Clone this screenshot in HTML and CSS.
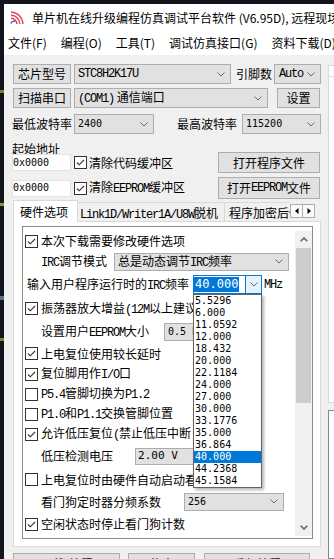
FILE: index.html
```html
<!DOCTYPE html>
<html lang="zh-CN">
<head>
<meta charset="UTF-8">
<meta name="viewport" content="width=device-width, initial-scale=1.0">
<title>STC-ISP</title>
<link rel="stylesheet" href="styles.css">
</head>
<body>
<div class="desk"></div>
<div class="win">
  <div class="titlebar">
    <svg class="appicon" viewBox="0 0 15 13">
      <g fill="none" stroke="#e23a5c" stroke-width="1.4">
        <path d="M1 1.2A11.8 11.8 0 0 1 12.8 13"/>
        <path d="M1 4.2A8.8 8.8 0 0 1 9.8 13"/>
        <path d="M1 7.2A5.8 5.8 0 0 1 6.8 13"/>
      </g>
      <path d="M0.8 12.6Q2 9.6 5 10.2" fill="none" stroke="#2f5bd0" stroke-width="1.4"/>
    </svg>
    <span class="title">单片机在线升级编程仿真调试平台软件 (V6.95D), 远程现场升级/仿真器</span>
  </div>
  <div class="menubar">
    <span>文件(F)</span>
    <span>编程(O)</span>
    <span>工具(T)</span>
    <span>调试仿真接口(G)</span>
    <span>资料下载(D)</span>
  </div>
  <div class="client">
    <div class="main">
      <div class="row">
        <div class="btn w-side">芯片型号</div>
        <div class="combo c-chip"><span class="mono">STC8H2K17U</span><svg class="chev" viewBox="0 0 8 5"><path d="M.5 .5 4 4 7.5 .5"/></svg></div>
        <span class="lbl l-pins">引脚数</span>
        <div class="combo c-auto"><span class="mono">Auto</span><svg class="chev" viewBox="0 0 8 5"><path d="M.5 .5 4 4 7.5 .5"/></svg></div>
      </div>
      <div class="row r2">
        <div class="btn w-side">扫描串口</div>
        <div class="combo c-port"><span><span class="mono">(COM1)</span> 通信端口</span><svg class="chev" viewBox="0 0 8 5"><path d="M.5 .5 4 4 7.5 .5"/></svg></div>
        <div class="btn b-set">设置</div>
      </div>
      <div class="row r3">
        <span class="lbl l-baud">最低波特率</span>
        <div class="combo c-baud1"><span class="num">2400</span><svg class="chev" viewBox="0 0 8 5"><path d="M.5 .5 4 4 7.5 .5"/></svg></div>
        <span class="lbl l-baud2">最高波特率</span>
        <div class="combo c-baud2"><span class="num">115200</span><svg class="chev" viewBox="0 0 8 5"><path d="M.5 .5 4 4 7.5 .5"/></svg></div>
      </div>
      <div class="addr">起始地址</div>
      <div class="row r5">
        <div class="edit"><span class="num">0x0000</span></div>
        <span class="cb"><svg viewBox="0 0 11 11"><path d="M2 5.5 4.3 7.8 9 3"/></svg></span>
        <span class="cbl">清除代码缓冲区</span>
        <div class="btn b-open">打开程序文件</div>
      </div>
      <div class="row r6">
        <div class="edit"><span class="num">0x0000</span></div>
        <span class="cb"><svg viewBox="0 0 11 11"><path d="M2 5.5 4.3 7.8 9 3"/></svg></span>
        <span class="cbl">清除<span class="mono">EEPROM</span>缓冲区</span>
        <div class="btn b-open">打开<span class="mono">EEPROM</span>文件</div>
      </div>

      <div class="tabs">
        <div class="tab sel">硬件选项</div>
        <div class="tab tab2"><span class="mono">Link1D/Writer1A/U8W</span>脱机</div>
        <div class="tab tab3">程序加密后传输</div>
        <div class="tabarw">
          <span class="arw"><svg viewBox="0 0 4 6"><path d="M3.5 0V6L0 3z"/></svg></span>
          <span class="arw"><svg viewBox="0 0 4 6"><path d="M.5 0V6L4 3z"/></svg></span>
        </div>
      </div>

      <div class="tabpanel">
        <div class="grp">
          <div class="pcontent">
            <div class="prow ph20">
              <span class="cb"><svg viewBox="0 0 11 11"><path d="M2 5.5 4.3 7.8 9 3"/></svg></span>
              <span>本次下载需要修改硬件选项</span>
            </div>
            <div class="prow ph21 ind">
              <span><span class="mono">IRC</span>调节模式</span>
              <div class="combo c-irc"><span>总是动态调节<span class="mono">IRC</span>频率</span><svg class="chev" viewBox="0 0 8 5"><path d="M.5 .5 4 4 7.5 .5"/></svg></div>
            </div>
            <div class="prow ph25 ind-s">
              <span>输入用户程序运行时的<span class="mono">IRC</span>频率</span>
              <div class="c-freq">
                <div class="val"><span class="hl">40.000</span></div>
                <div class="drop"><svg class="chev" viewBox="0 0 8 5"><path d="M.5 .5 4 4 7.5 .5"/></svg></div>
                <div class="dlist">
                  <div>5.5296</div>
                  <div>6.000</div>
                  <div>11.0592</div>
                  <div>12.000</div>
                  <div>18.432</div>
                  <div>20.000</div>
                  <div>22.1184</div>
                  <div>24.000</div>
                  <div>27.000</div>
                  <div>30.000</div>
                  <div>33.1776</div>
                  <div>35.000</div>
                  <div>36.864</div>
                  <div class="cur">40.000</div>
                  <div>44.2368</div>
                  <div>45.1584</div>
                </div>
              </div>
              <span class="mono mhz">MHz</span>
            </div>
            <div class="prow ph23">
              <span class="cb"><svg viewBox="0 0 11 11"><path d="M2 5.5 4.3 7.8 9 3"/></svg></span>
              <span>振荡器放大增益<span class="mono">(12M</span>以上建议选择<span class="mono">)</span></span>
            </div>
            <div class="prow ph23 ind">
              <span>设置用户<span class="mono">EEPROM</span>大小</span>
              <div class="combo c-eep"><span class="num">0.5 K</span></div>
            </div>
            <div class="prow ph21">
              <span class="cb"><svg viewBox="0 0 11 11"><path d="M2 5.5 4.3 7.8 9 3"/></svg></span>
              <span>上电复位使用较长延时</span>
            </div>
            <div class="prow ph20">
              <span class="cb"><svg viewBox="0 0 11 11"><path d="M2 5.5 4.3 7.8 9 3"/></svg></span>
              <span>复位脚用作<span class="mono">I/O</span>口</span>
            </div>
            <div class="prow ph20">
              <span class="cb"></span>
              <span><span class="mono">P5.4</span>管脚切换为<span class="mono">P1.2</span></span>
            </div>
            <div class="prow ph20">
              <span class="cb"></span>
              <span><span class="mono">P1.0</span>和<span class="mono">P1.1</span>交换管脚位置</span>
            </div>
            <div class="prow ph20">
              <span class="cb"><svg viewBox="0 0 11 11"><path d="M2 5.5 4.3 7.8 9 3"/></svg></span>
              <span>允许低压复位<span class="mono">(</span>禁止低压中断<span class="mono">)</span></span>
            </div>
            <div class="prow ph24 ind">
              <span>低压检测电压</span>
              <div class="combo c-volt"><span class="num">2.00 V</span></div>
            </div>
            <div class="prow ph23">
              <span class="cb"></span>
              <span>上电复位时由硬件自动启动看门狗</span>
            </div>
            <div class="prow ph21 ind">
              <span>看门狗定时器分频系数</span>
              <div class="combo c-wdt"><span class="num">256</span><svg class="chev" viewBox="0 0 8 5"><path d="M.5 .5 4 4 7.5 .5"/></svg></div>
            </div>
            <div class="prow ph24">
              <span class="cb"><svg viewBox="0 0 11 11"><path d="M2 5.5 4.3 7.8 9 3"/></svg></span>
              <span>空闲状态时停止看门狗计数</span>
            </div>
          </div>
          <div class="vscroll">
            <div class="sb-btn"><svg viewBox="0 0 8 5"><path d="M.7 4.3 4 1 7.3 4.3"/></svg></div>
            <div class="sb-thumb"></div>
            <div class="sb-track"></div>
            <div class="sb-btn"><svg viewBox="0 0 8 5"><path d="M.7 .7 4 4 7.3 .7"/></svg></div>
          </div>
        </div>
      </div>

      <div class="bottom">
        <div class="btn bb1">下载/编程</div>
        <div class="btn bb2">停止</div>
        <div class="btn bb3">重复编程</div>
      </div>
    </div>

    <div class="side">
      <div class="s-tab"></div>
      <div class="s-panel"></div>
      <div class="s-box"></div>
    </div>
  </div>
</div>
</body>
</html>
```

FILE: styles.css
```css
* {
	box-sizing: border-box;
}
body {
	margin: 0;
	width: 334px;
	height: 559px;
	overflow: hidden;
	display: flex;
	background: #12161c;
	font-family: "Noto Sans CJK SC", sans-serif;
	font-size: 12px;
	line-height: 16px;
	color: #000;
}
.mono {
	font-family: "Liberation Mono", monospace;
	letter-spacing: -1.2px;
}
.num {
	font-family: "DejaVu Sans Mono", monospace;
	font-size: 10px;
}

/* desktop strip and window frame */
.desk {
	width: 4px;
	flex: none;
	background: linear-gradient(#12161c 0 90px, #8a7a2a 90px 93px, #12161c 93px 203px, #a08c30 203px 206px, #12161c 206px 296px, #5a6e90 296px 300px, #12161c 300px 338px, #8a7a2a 338px 341px, #12161c 341px);
}
.win {
	flex: 1;
	min-width: 0;
	margin-top: 4px;
	display: flex;
	flex-direction: column;
	background: #f0f0f0;
}
.titlebar {
	height: 27px;
	flex: none;
	display: flex;
	align-items: center;
	padding-left: 6px;
	background: #fff;
	white-space: nowrap;
	overflow: hidden;
}
.appicon {
	width: 15px;
	height: 13px;
	flex: none;
	margin-right: 7px;
}
.menubar {
	height: 24px;
	flex: none;
	display: flex;
	align-items: center;
	gap: 14px;
	padding-left: 4px;
	background: #fff;
	white-space: nowrap;
	overflow: hidden;
}
.client {
	flex: 1;
	min-height: 0;
	display: flex;
}
.main {
	width: 317px;
	flex: none;
	display: flex;
	flex-direction: column;
	padding: 9px 0 0 9px;
}

/* top rows */
.row {
	display: flex;
	align-items: center;
	width: 308px;
	height: 20px;
	flex: none;
}
.r2 {
	margin-top: 4px;
}
.r3 {
	margin-top: 6px;
}
.addr {
	height: 18px;
	line-height: 30px;
	margin-left: -1px;
	flex: none;
}
.r5 {
	height: 21px;
}
.r6 {
	height: 22px;
	margin-top: 4px;
}
.btn {
	height: 100%;
	flex: none;
	display: flex;
	align-items: center;
	justify-content: center;
	border: 1px solid #adadad;
	background: #e1e1e1;
	white-space: nowrap;
	overflow: hidden;
}
.w-side {
	width: 58px;
}
.b-set {
	width: 43px;
	margin-left: 9px;
}
.b-open {
	width: 102px;
	margin-left: auto;
	margin-right: 1px;
}
.combo {
	height: 20px;
	flex: none;
	display: flex;
	align-items: center;
	justify-content: space-between;
	padding: 0 5px 0 3px;
	border: 1px solid #adadad;
	background: #e1e1e1;
	white-space: nowrap;
	overflow: hidden;
}
.chev {
	width: 8px;
	height: 5px;
	flex: none;
	fill: none;
	stroke: #6b6b6b;
	stroke-width: 1;
}
.lbl {
	flex: none;
	white-space: nowrap;
}
.c-chip {
	width: 157px;
	margin-left: 3px;
}
.l-pins {
	margin-left: 5px;
}
.c-auto {
	width: 47px;
	margin-left: 2px;
	padding-left: 4px;
}
.c-port {
	width: 194px;
	margin-left: 3px;
}
.l-baud {
	margin-left: -1px;
}
.c-baud1 {
	width: 80px;
	margin-left: 2px;
}
.l-baud2 {
	margin-left: 23px;
}
.c-baud2 {
	width: 79px;
	margin-left: 5px;
}
.edit {
	width: 59px;
	height: 17px;
	flex: none;
	margin-left: -1px;
	display: flex;
	align-items: center;
	border: 1px solid #e3e3e3;
	background: #fff;
}
.cb {
	width: 13px;
	height: 13px;
	flex: none;
	display: flex;
	align-items: center;
	justify-content: center;
	border: 1px solid #333;
	background: #fff;
}
.cb svg {
	width: 11px;
	height: 11px;
	fill: none;
	stroke: #333;
	stroke-width: 1.1;
}
.r5 .cb,
.r6 .cb {
	margin-left: 3px;
}
.cbl {
	margin-left: 2px;
	white-space: nowrap;
}

/* tabs */
.tabs {
	display: flex;
	align-items: flex-end;
	width: 308px;
	height: 21px;
	margin-top: 1px;
	flex: none;
	position: relative;
	z-index: 1;
}
.tab {
	height: 19px;
	line-height: 20px;
	flex: none;
	border: 1px solid #d9d9d9;
	border-bottom: 0;
	background: #f0f0f0;
	white-space: nowrap;
	overflow: hidden;
}
.tab.sel {
	width: 65px;
	height: 22px;
	margin-bottom: -1px;
	padding: 1px 0 0 6px;
	background: #fff;
}
.tab2 {
	width: 147px;
	padding-left: 2px;
	border-left: 0;
}
.tab3 {
	width: 65px;
	padding-left: 4px;
	border-left: 0;
	border-right: 0;
}
.tabarw {
	display: flex;
	align-self: flex-start;
	margin-top: 4px;
}
.arw {
	width: 13px;
	height: 14px;
	display: flex;
	align-items: center;
	justify-content: center;
	border: 1px solid #adadad;
	background: #fafafa;
}
.arw + .arw {
	margin-left: -1px;
}
.arw svg {
	width: 4px;
	height: 6px;
	fill: #000;
}
.tabpanel {
	width: 308px;
	height: 326px;
	flex: none;
	padding: 4px 7px 8px 8px;
	border: 1px solid #d9d9d9;
	background: #fff;
}
.grp {
	height: 313px;
	display: flex;
	border: 1px solid #8a8a8a;
}
.pcontent {
	flex: 1;
	min-width: 0;
	overflow: hidden;
	padding-top: 4px;
}
.prow {
	display: flex;
	align-items: center;
	white-space: nowrap;
}
.prow > .cb {
	margin-left: 2px;
}
.prow > .cb + span {
	margin-left: 3px;
}
.ph20 { height: 20px; }
.ph21 { height: 21px; }
.ph23 { height: 23px; }
.ph24 { height: 24px; }
.ph25 { height: 25px; }
.ind {
	padding-left: 18px;
}
.ind-s {
	padding-left: 4px;
}
.c-irc {
	width: 175px;
	height: 18px;
	margin-left: 7px;
}
.c-eep {
	width: 50px;
	height: 18px;
	margin-left: 15px;
}
.c-volt {
	width: 60px;
	height: 17px;
	margin-left: 22px;
	padding-left: 2px;
}
.c-volt .num {
	font-size: 11px;
}
.c-wdt {
	width: 100px;
	height: 18px;
	margin-left: 23px;
}

/* focused editable combo with open list */
.c-freq {
	position: relative;
	width: 69px;
	height: 19px;
	flex: none;
	margin-left: 4px;
	display: flex;
	border: 1px solid #0078d7;
	background: #fff;
}
.c-freq .val {
	flex: 1;
	display: flex;
	align-items: center;
}
.c-freq .hl {
	padding: 0 1px;
	background: #0078d7;
	color: #fff;
	font-family: "DejaVu Sans Mono", monospace;
	font-size: 12px;
	line-height: 15px;
}
.c-freq .drop {
	width: 16px;
	display: flex;
	align-items: center;
	justify-content: center;
	border-left: 1px solid #0078d7;
	background: #e5f1fb;
}
.dlist {
	position: absolute;
	left: -1px;
	top: calc(100% + 1px);
	z-index: 5;
	width: 69px;
	border: 1px solid #646464;
	background: #fff;
	box-shadow: 2px 2px 3px rgba(0, 0, 0, 0.3);
	font-family: "DejaVu Sans Mono", monospace;
	font-size: 10px;
}
.dlist div {
	height: 12px;
	line-height: 12px;
	padding-left: 1px;
}
.dlist .cur {
	background: #0078d7;
	color: #fff;
}
.mhz {
	margin-left: 2px;
}

/* scrollbar */
.vscroll {
	width: 17px;
	flex: none;
	margin: 4px 0 2px;
	display: flex;
	flex-direction: column;
	background: #f0f0f0;
}
.sb-btn {
	height: 17px;
	flex: none;
	display: flex;
	align-items: center;
	justify-content: center;
}
.sb-btn svg {
	width: 8px;
	height: 5px;
	fill: none;
	stroke: #606060;
	stroke-width: 1.5;
}
.sb-thumb {
	height: 155px;
	flex: none;
	margin: 0 1px;
	background: #cdcdcd;
}
.sb-track {
	flex: 1;
}

/* bottom buttons */
.bottom {
	display: flex;
	margin-top: 6px;
	flex: none;
}
.bottom .btn {
	height: 22px;
}
.bb1 {
	width: 107px;
}
.bb2 {
	width: 67px;
	margin-left: 8px;
}
.bb3 {
	width: 106px;
	margin-left: 9px;
}

/* right side panes */
.side {
	flex: 1;
	min-width: 0;
	display: flex;
	flex-direction: column;
	padding: 10px 0 0 7px;
}
.s-tab {
	height: 11px;
	flex: none;
	border: 1px solid #d9d9d9;
	border-right: 0;
	border-bottom: 0;
	background: #fff;
}
.s-panel {
	height: 327px;
	flex: none;
	border: 1px solid #d9d9d9;
	border-right: 0;
	background: #fff;
}
.s-box {
	flex: 1;
	margin-top: 7px;
	border: 1px solid #828790;
	border-right: 0;
	background: #fff;
}
```
